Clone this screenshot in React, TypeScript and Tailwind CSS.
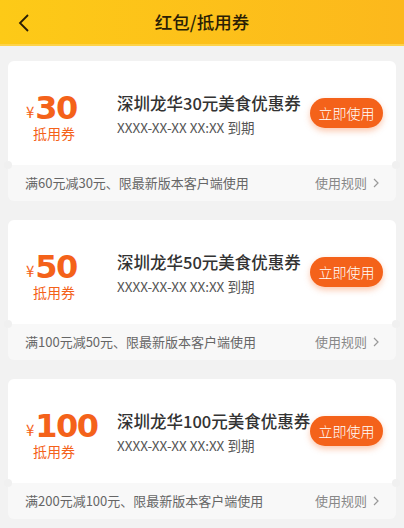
import React from "react";

const coupons = [
  { amount: "30", title: "深圳龙华30元美食优惠券", rule: "满60元减30元、限最新版本客户端使用" },
  { amount: "50", title: "深圳龙华50元美食优惠券", rule: "满100元减50元、限最新版本客户端使用" },
  { amount: "100", title: "深圳龙华100元美食优惠券", rule: "满200元减100元、限最新版本客户端使用" },
];

const cjk = { fontFamily: '"Noto Sans CJK SC", "Noto Sans", sans-serif' };

function Coupon({ amount, title, rule }: { amount: string; title: string; rule: string }) {
  return (
    <div className="relative mx-[8px]">
      <div className="flex h-[104px] items-center rounded-t-[6px] bg-white">
        <div className="flex w-[109px] shrink-0 flex-col pl-[18px] pt-[8px]">
          <div className="flex h-[32px] items-center text-[#f4621a]">
            <span className="mr-[1px] mt-[8px] text-[15px] leading-[16px]" style={cjk}>¥</span>
            <span
              className="text-[32px] font-bold leading-[32px] tracking-[-1.5px]"
              style={{ fontFamily: '"DejaVu Sans", "Liberation Sans", sans-serif' }}
            >
              {amount}
            </span>
          </div>
          <div className="pl-[7px] text-[14px] leading-[18px] text-[#f4621a]">抵用券</div>
        </div>
        <div className="flex min-w-0 flex-1 flex-col pt-[2px]">
          <div className="whitespace-nowrap text-[16.5px] font-medium leading-[22px] text-[#333333]">{title}</div>
          <div className="mt-[4px] whitespace-nowrap text-[13.5px] leading-[18px] text-[#555555]">XXXX-XX-XX XX:XX 到期</div>
        </div>
        <button className="mr-[13px] h-[30px] w-[73px] shrink-0 rounded-full bg-[#f4621a] text-[14px] font-light text-white shadow-[0_3px_6px_rgba(244,98,26,0.35)]">
          立即使用
        </button>
      </div>
      <div className="flex h-[36px] items-center justify-between rounded-b-[6px] bg-[#f8f8f8] pl-[17px] pr-[16px] text-[13px] text-[#666666]">
        <span>{rule}</span>
        <span className="flex items-center gap-[5px] text-[#888888]">
          使用规则
          <svg width="8" height="10" viewBox="0 0 8 10" fill="none">
            <path d="M2 1l4 4-4 4" stroke="#999" strokeWidth="1.2" />
          </svg>
        </span>
      </div>
      <div className="absolute left-[-4px] top-[100px] h-[8px] w-[8px] rounded-full bg-[#f0f0f0]" />
      <div className="absolute right-[-4px] top-[100px] h-[8px] w-[8px] rounded-full bg-[#f0f0f0]" />
    </div>
  );
}

export default function App() {
  return (
    <div className="h-[528px] w-[404px] overflow-hidden bg-[#f2f2f2]" style={cjk}>
      <div className="relative flex h-[46px] items-center justify-center border-b-[2px] border-[#fdd34a] bg-gradient-to-r from-[#fdca17] to-[#fcb81c]">
        <svg className="absolute left-[17px] top-[13px]" width="14" height="20" viewBox="0 0 14 20" fill="none">
          <path d="M11 2L3 10l8 8" stroke="#2a1e05" strokeWidth="1.8" />
        </svg>
        <span className="text-[17.5px] font-medium text-[#2a1e05]">红包/抵用券</span>
      </div>
      <div className="flex flex-col gap-[19px] pt-[15px]">
        {coupons.map((c) => (
          <Coupon key={c.amount} {...c} />
        ))}
      </div>
    </div>
  );
}
